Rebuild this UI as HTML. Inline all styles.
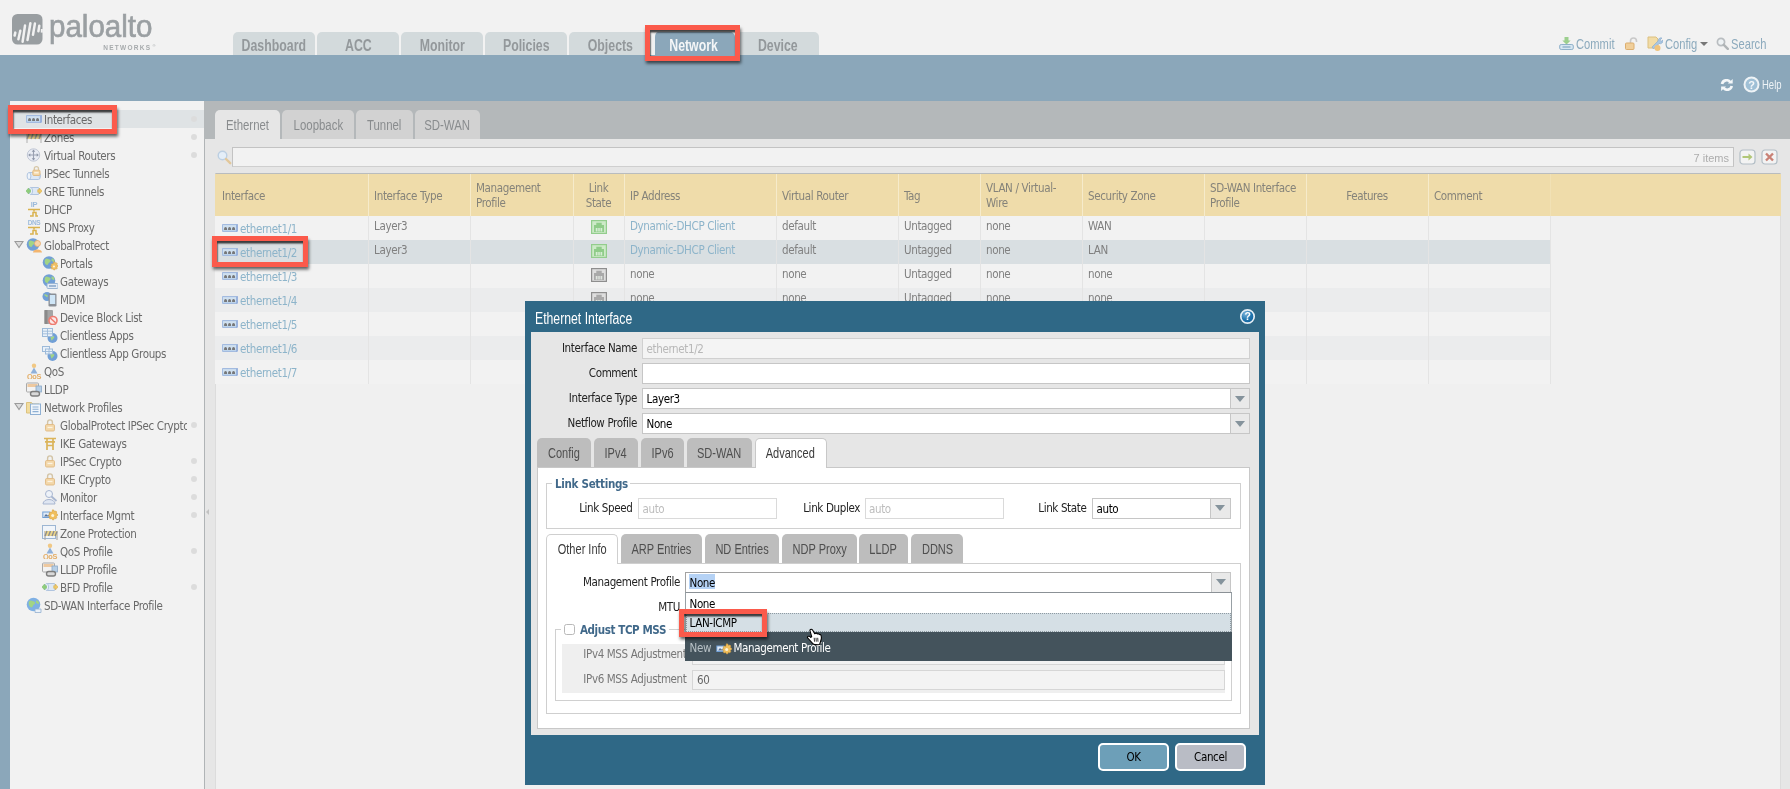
<!DOCTYPE html><html><head><meta charset="utf-8"><title>Ethernet Interface</title><style>
*{box-sizing:border-box;margin:0;padding:0}
html,body{width:1790px;height:789px;overflow:hidden;background:#f2f2f2}
body{position:relative;font-family:"DejaVu Sans Condensed","Liberation Sans",sans-serif;font-size:11.5px;letter-spacing:-0.36px;color:#6a6a6a}
#w{position:absolute;left:0;top:0;width:1790px;height:789px;will-change:transform}
.a{position:absolute}
.t{position:absolute;white-space:nowrap;line-height:20px;height:20px}
.n{font-family:"Liberation Sans",sans-serif;letter-spacing:0}
.c{display:inline-block;white-space:nowrap;transform-origin:0 50%}
.cc{transform-origin:50% 50%}
.red{position:absolute;border:5px solid #fb5a4b;box-shadow:1px 2.5px 3px rgba(0,0,0,.6),inset .6px 2.6px 1.6px rgba(0,0,0,.75)}
.dot{position:absolute;width:6px;height:6px;border-radius:3px;background:#dcdcdc;left:191px}
.vl{position:absolute;width:1px;background:#e4e4e4;top:216px;height:168px}
.hl{position:absolute;width:1px;background:#f6ebcb;top:174px;height:42px}
.lnk{color:#8db4ca}
.cell{color:#808080}
.lab{color:#222}
.inp{position:absolute;background:#fff;border:1px solid #c6c6c6}
.trg{position:absolute;background:#e9e9e9;border:1px solid #c6c6c6}
.trg:after{content:"";position:absolute;left:50%;top:50%;margin:-3px 0 0 -5.2px;border-left:5.2px solid transparent;border-right:5.2px solid transparent;border-top:6px solid #85939c}
.tab{position:absolute;border-radius:4px 4px 0 0;text-align:center}
</style></head><body><div id="w">
<div class="a" style="left:0px;top:0px;width:1790px;height:55px;background:#f2f2f2"></div>
<svg class="a" style="left:12px;top:13.8px" width="31" height="31" viewBox="0 0 31 31"><rect width="30.5" height="30.5" rx="5.5" fill="#999ea1"/><g stroke="#f2f2f2" stroke-width="2.5" stroke-linecap="round"><path d="M3.3 18.6L2.6 21.6"/><path d="M8.3 16.8L6.4 25.2"/><path d="M13 11.6L10.6 27.8"/><path d="M18.4 9.2L15.5 26"/><path d="M22.9 9.6L21 20.8"/><path d="M27.3 11.8L26.4 17.2"/></g><rect x="28.8" y="15" width="2" height="3.6" fill="#f2f2f2"/></svg>
<div class="t n" style="left:49.3px;top:17px;font-size:30.5px;color:#9a9fa2;line-height:40px;height:40px;top:6px;-webkit-text-stroke:0.65px #9a9fa2"><span class="c" style="transform:scaleX(0.968)">paloalto</span></div>
<div class="t n" style="left:103.3px;top:37.7px;font-size:6.5px;font-weight:bold;color:#a6aaac;letter-spacing:1.25px">NETWORKS</div>
<div class="t n" style="left:152.5px;top:35.5px;font-size:4px;color:#a6aaac">®</div>
<div class="a" style="left:233px;top:32px;width:82px;height:23px;background:#d3dadc;border-radius:5px 5px 0 0;"></div>
<div class="t n" style="left:214px;width:120px;top:35.6px;text-align:center;font-size:16px;font-weight:bold;color:#93989b"><span class="c cc" style="transform:scaleX(0.77)">Dashboard</span></div>
<div class="a" style="left:317px;top:32px;width:82px;height:23px;background:#d3dadc;border-radius:5px 5px 0 0;"></div>
<div class="t n" style="left:298px;width:120px;top:35.6px;text-align:center;font-size:16px;font-weight:bold;color:#93989b"><span class="c cc" style="transform:scaleX(0.77)">ACC</span></div>
<div class="a" style="left:401px;top:32px;width:82px;height:23px;background:#d3dadc;border-radius:5px 5px 0 0;"></div>
<div class="t n" style="left:382px;width:120px;top:35.6px;text-align:center;font-size:16px;font-weight:bold;color:#93989b"><span class="c cc" style="transform:scaleX(0.77)">Monitor</span></div>
<div class="a" style="left:485px;top:32px;width:82px;height:23px;background:#d3dadc;border-radius:5px 5px 0 0;"></div>
<div class="t n" style="left:466px;width:120px;top:35.6px;text-align:center;font-size:16px;font-weight:bold;color:#93989b"><span class="c cc" style="transform:scaleX(0.77)">Policies</span></div>
<div class="a" style="left:569px;top:32px;width:82px;height:23px;background:#d3dadc;border-radius:5px 5px 0 0;"></div>
<div class="t n" style="left:550px;width:120px;top:35.6px;text-align:center;font-size:16px;font-weight:bold;color:#93989b"><span class="c cc" style="transform:scaleX(0.77)">Objects</span></div>
<div class="a" style="left:653px;top:32px;width:82px;height:23px;background:#8ba7ba;border-radius:5px 5px 0 0;border-left:2px solid #eef1f2;"></div>
<div class="t n" style="left:634px;width:120px;top:35.6px;text-align:center;font-size:16px;font-weight:bold;color:#f4f6f7"><span class="c cc" style="transform:scaleX(0.77)">Network</span></div>
<div class="a" style="left:737px;top:32px;width:82px;height:23px;background:#d3dadc;border-radius:5px 5px 0 0;"></div>
<div class="t n" style="left:718px;width:120px;top:35.6px;text-align:center;font-size:16px;font-weight:bold;color:#93989b"><span class="c cc" style="transform:scaleX(0.77)">Device</span></div>
<div class="t n" style="left:1575.6px;top:33.8px;font-size:15px;color:#8caabd"><span class="c" style="transform:scaleX(0.745)">Commit</span></div>
<div class="t n" style="left:1665.2px;top:33.8px;font-size:15px;color:#8caabd"><span class="c" style="transform:scaleX(0.745)">Config</span></div>
<div class="t n" style="left:1731px;top:33.8px;font-size:15px;color:#8caabd"><span class="c" style="transform:scaleX(0.745)">Search</span></div>
<div class="a" style="left:1700px;top:42px;border-left:4px solid transparent;border-right:4px solid transparent;border-top:4.5px solid #777"></div>
<svg class="a" style="left:1559px;top:36px" width="15" height="15" viewBox="0 0 15 15"><path d="M5.5 1h4v3.5h2.2L7.5 8.6 3.3 4.5h2.2z" fill="#9ccf8e"/><rect x="0.7" y="8.5" width="13.6" height="5" rx="1.5" fill="#d6e6f1" stroke="#8fb1c9"/><rect x="3.5" y="10.3" width="8" height="1.4" fill="#8fb1c9"/></svg>
<svg class="a" style="left:1625px;top:37px" width="13" height="14" viewBox="0 0 13 14"><path d="M5.5 6V4a3 3 0 0 1 6 0v1" fill="none" stroke="#c9c9c9" stroke-width="1.6"/><rect x="0.5" y="6" width="8.5" height="6.5" rx="1" fill="#f0cf9b" stroke="#dcae6f"/></svg>
<svg class="a" style="left:1647px;top:36px" width="16" height="16" viewBox="0 0 16 16"><path d="M1 1h8l2 2v9H1z" fill="#f2dca6" stroke="#dcc080"/><path d="M5 11l6-6a3 3 0 0 1 4-3l-2 2 1 1.5 2-1.5a3 3 0 0 1-4 3.5l-5.5 5.5z" fill="#a9c6e2" stroke="#86aacb" stroke-width=".6"/><circle cx="10.5" cy="12" r="3" fill="#f0c47c"/></svg>
<svg class="a" style="left:1716px;top:37px" width="13" height="13" viewBox="0 0 13 13"><circle cx="5" cy="5" r="3.6" fill="#eef2f4" stroke="#b9bdc0" stroke-width="1.7"/><path d="M7.8 7.8l4 4" stroke="#b0b4b6" stroke-width="2.4" stroke-linecap="round"/></svg>
<div class="a" style="left:0px;top:55px;width:1790px;height:46px;background:#8ba7ba"></div>
<div class="a" style="left:0px;top:101px;width:10px;height:688px;background:#8ba7ba"></div>
<svg class="a" style="left:1719.5px;top:79px" width="13.8" height="12" viewBox="0 0 15 13"><g fill="none" stroke="#f4f7f9" stroke-width="2.9"><path d="M2.2 5.5a5 5 0 0 1 9-2"/><path d="M12.8 7.5a5 5 0 0 1-9 2"/></g><path d="M8.5 4.8h5.3V0z" fill="#f4f7f9"/><path d="M6.5 8.2H1.2V13z" fill="#f4f7f9"/></svg>
<svg class="a" style="left:1743px;top:76px" width="17" height="17" viewBox="0 0 17 17"><circle cx="8.5" cy="8.5" r="7" fill="#9fc0d6" stroke="#eef3f6" stroke-width="2"/><text x="8.5" y="12.5" text-anchor="middle" font-family="Liberation Sans,sans-serif" font-weight="bold" font-size="11" fill="#f4f7f9">?</text></svg>
<div class="t n" style="left:1761.6px;top:74.5px;font-size:13px;color:#eef3f6"><span class="c" style="transform:scaleX(0.73)">Help</span></div>
<div class="a" style="left:10px;top:101px;width:194px;height:688px;background:#f2f2f2;border-radius:6.5px 0 0 0"></div>
<div class="a" style="left:10px;top:110px;width:194px;height:18px;background:#dfe3e5"></div>
<svg class="a" style="left:26px;top:111px" width="16" height="16" viewBox="0 0 16 16"><rect x="0" y="4.1" width="15.8" height="7.8" rx=".8" fill="#a3bbe0"/><path d="M14.1 5.1l1.7-1v7l-1.7.8z" fill="#93addb"/><rect x="1" y="5.1" width="13.1" height="5.6" fill="#cfe0f0"/><rect x="1" y="9.3" width="13.1" height="1.4" fill="#b9d2ec"/><path d="M2.1 9.9V8.5q0-1.6 1.45-1.6T5 8.5v1.4zM6.1 9.9V8.5q0-1.6 1.45-1.6T9 8.5v1.4zM10.1 9.9V8.5q0-1.6 1.45-1.6T13 8.5v1.4z" fill="#777879"/></svg>
<div class="t " style="left:44px;top:109.5px;">Interfaces</div>
<div class="dot" style="top:116px"></div>
<svg class="a" style="left:26px;top:129px" width="16" height="16" viewBox="0 0 16 16"><path d="M1 14V5M15 14V5" stroke="#bbb" stroke-width="1.2"/><path d="M1 5h14v5H1z" fill="#ecd58a"/><path d="M3 5l-2 5M7 5l-2 5M11 5l-2 5M15 5l-2 5" stroke="#9a9a9a" stroke-width="1.5"/></svg>
<div class="t " style="left:44px;top:127.5px;">Zones</div>
<div class="dot" style="top:134px"></div>
<svg class="a" style="left:26px;top:147px" width="16" height="16" viewBox="0 0 16 16"><circle cx="7.5" cy="8" r="6.2" fill="#e9ecf4" stroke="#c0c6d4"/><path d="M7.5 4v8M3.5 8h8" stroke="#9aa1b2" stroke-width="1.1"/><path d="M7.5 2.6l1.8 2.2H5.7zM7.5 13.4l1.8-2.2H5.7zM2.1 8l2.2-1.8v3.6zM12.9 8l-2.2-1.8v3.6z" fill="#8f97a9"/></svg>
<div class="t " style="left:44px;top:145.5px;">Virtual Routers</div>
<div class="dot" style="top:152px"></div>
<svg class="a" style="left:26px;top:165px" width="16" height="16" viewBox="0 0 16 16"><path d="M3 7.5h9.5v7H3z" fill="#dde8f5"/><path d="M3 7.5h9.5M3 14.5h9.5" stroke="#a9bfdc" stroke-width=".9"/><ellipse cx="3" cy="11" rx="1.9" ry="3.5" fill="#eef4fb" stroke="#a9bfdc" stroke-width=".9"/><path d="M12.5 7.5a1.9 3.5 0 0 1 0 7" fill="#c9daef" stroke="#a9bfdc" stroke-width=".9"/><path d="M8.3 5.2V3.8a2.1 2.1 0 0 1 4.2 0v1.4" fill="none" stroke="#d6c7a8" stroke-width="1.3"/><rect x="6.8" y="5.2" width="7.2" height="5.3" rx="1" fill="#f3d6a6" stroke="#e0b77c" stroke-width=".9"/><rect x="8.2" y="7.1" width="4.4" height="1.3" fill="#fdf5e6"/></svg>
<div class="t " style="left:44px;top:163.5px;">IPSec Tunnels</div>
<svg class="a" style="left:26px;top:183px" width="16" height="16" viewBox="0 0 16 16"><path d="M4.5 4.5h7.5v7H4.5z" fill="#dde8f5"/><path d="M4.5 4.5h7.5M4.5 11.5h7.5" stroke="#a9bfdc" stroke-width=".9"/><ellipse cx="4.8" cy="8" rx="1.7" ry="3.5" fill="#eef4fb" stroke="#a9bfdc" stroke-width=".9"/><path d="M12 4.5a1.7 3.5 0 0 1 0 7" fill="#c9daef" stroke="#a9bfdc" stroke-width=".9"/><path d="M0 8l2.6-3v1.7h1.9v2.6H2.6V11z" fill="#8fcf7c" stroke="#6fb75e" stroke-width=".5"/><path d="M16 8l-2.6-3v1.7h-1.7v2.6h1.7V11z" fill="#efc968" stroke="#d9ab42" stroke-width=".5"/></svg>
<div class="t " style="left:44px;top:181.5px;">GRE Tunnels</div>
<svg class="a" style="left:26px;top:201px" width="16" height="16" viewBox="0 0 16 16"><text x="8" y="6" text-anchor="middle" font-family="Liberation Sans,sans-serif" font-size="7.5" font-weight="bold" fill="#9dbbdb">IP</text><path d="M2 8.5h12M8 8.5v2M4 15h3v-3.5h3V15h2" fill="none" stroke="#d9b24e" stroke-width="1.5"/></svg>
<div class="t " style="left:44px;top:199.5px;">DHCP</div>
<svg class="a" style="left:26px;top:219px" width="16" height="16" viewBox="0 0 16 16"><text x="8" y="6" text-anchor="middle" font-family="Liberation Sans,sans-serif" font-size="6.5" font-weight="bold" fill="#9dbbdb">DNS</text><path d="M2 8.5h12M8 8.5v2M4 15h3v-3.5h3V15h2" fill="none" stroke="#d9b24e" stroke-width="1.5"/></svg>
<div class="t " style="left:44px;top:217.5px;">DNS Proxy</div>
<svg class="a" style="left:26px;top:237px" width="16" height="16" viewBox="0 0 16 16"><circle cx="7" cy="7.5" r="6.3" fill="#719fd6"/><path d="M3 4.5c2-2 3 0 4.5 0s1.5 2.5 0 3-1 2.5-2.5 2.5S2 7 3 4.5z" fill="#a2d485"/><path d="M9.5 3.5c1.5-.5 3 1 3 2.5s-2 1-3-.5z" fill="#a2d485"/><circle cx="11.5" cy="6.5" r="3" fill="#f6d3a8" stroke="#e4a869" stroke-width=".8"/><path d="M7 15.5c0-4 9-4 9 0z" fill="#f3b56e"/></svg>
<div class="t " style="left:44px;top:235.5px;">GlobalProtect</div>
<svg class="a" style="left:14px;top:240px" width="10" height="9" viewBox="0 0 10 9"><path d="M1 1.5h8L5 7.5z" fill="#dcdcdc" stroke="#9b9b9b" stroke-width="1.1"/></svg>
<svg class="a" style="left:42px;top:255px" width="16" height="16" viewBox="0 0 16 16"><circle cx="7" cy="7.5" r="6.3" fill="#719fd6"/><path d="M3 4.5c2-2 3 0 4.5 0s1.5 2.5 0 3-1 2.5-2.5 2.5S2 7 3 4.5z" fill="#a2d485"/><path d="M9.5 3.5c1.5-.5 3 1 3 2.5s-2 1-3-.5z" fill="#a2d485"/><g transform="translate(1.3 2.9)"><path d="M10.5 2.8l1.3.2.5 1.5 1.5-.500 1 1-.6 1.4 1.3.8v1.4l-1.3.8.6 1.4-1 1-1.5-.500-.500 1.5h-1.4l-.700-1.4-1.5.500-1-1 .600-1.5-1.3-.700V8.3l1.3-.800-.600-1.4 1-1 1.5.500z" fill="#f0c066" stroke="#d9a444" stroke-width=".6" transform="scale(.82) translate(2.3 1.9)"/><circle cx="10.65" cy="8.6" r="1.1" fill="#fdf3d6"/></g></svg>
<div class="t " style="left:60px;top:253.5px;">Portals</div>
<svg class="a" style="left:42px;top:273px" width="16" height="16" viewBox="0 0 16 16"><circle cx="7" cy="7.5" r="6.3" fill="#719fd6"/><path d="M3 4.5c2-2 3 0 4.5 0s1.5 2.5 0 3-1 2.5-2.5 2.5S2 7 3 4.5z" fill="#a2d485"/><path d="M9.5 3.5c1.5-.5 3 1 3 2.5s-2 1-3-.5z" fill="#a2d485"/><rect x="5" y="10.5" width="11" height="5" rx="1" fill="#e4ecf5" stroke="#9bb5d3"/><path d="M7 13h7" stroke="#6f93bd" stroke-width="1.2"/></svg>
<div class="t " style="left:60px;top:271.5px;">Gateways</div>
<svg class="a" style="left:42px;top:291px" width="16" height="16" viewBox="0 0 16 16"><circle cx="5" cy="5.5" r="4.5" fill="#719fd6"/><path d="M2 4c1-1.5 2 0 3 0s1 2 0 2.3z" fill="#a2d485"/><rect x="6.5" y="2.5" width="8" height="13" rx="1.3" fill="#8a8f96"/><rect x="7.8" y="4" width="5.4" height="9" fill="#cfe6f7"/></svg>
<div class="t " style="left:60px;top:289.5px;">MDM</div>
<svg class="a" style="left:42px;top:309px" width="16" height="16" viewBox="0 0 16 16"><rect x="2.5" y="1" width="8.5" height="14" rx="1" fill="#a4a4a4"/><rect x="2.5" y="1" width="3" height="14" fill="#8a8a8a"/><circle cx="11" cy="11.5" r="4" fill="#fbe9e7" stroke="#ee7b70" stroke-width="1.6"/><path d="M8.3 9l5.4 5" stroke="#ee7b70" stroke-width="1.6"/></svg>
<div class="t " style="left:60px;top:307.5px;">Device Block List</div>
<svg class="a" style="left:42px;top:327px" width="16" height="16" viewBox="0 0 16 16"><circle cx="10.5" cy="11" r="5" fill="#719fd6"/><path d="M8 9c1.5-1.5 2.5 0 3.5 0s1 2 0 2.5-1 2-2 2z" fill="#a2d485"/><rect x=".5" y="1.5" width="10" height="8" fill="#e9f1f9" stroke="#9dbad9"/><path d="M.5 4.2h10M.5 6.8h10M5.5 1.5v8" stroke="#9dbad9" stroke-width=".9"/></svg>
<div class="t " style="left:60px;top:325.5px;">Clientless Apps</div>
<svg class="a" style="left:42px;top:345px" width="16" height="16" viewBox="0 0 16 16"><circle cx="10.5" cy="11" r="5" fill="#719fd6"/><path d="M8 9c1.5-1.5 2.5 0 3.5 0s1 2 0 2.5-1 2-2 2z" fill="#a2d485"/><rect x=".5" y="1.5" width="7" height="5" fill="#e9f1f9" stroke="#9dbad9"/><rect x="3.5" y="4" width="7" height="5" fill="#e9f1f9" stroke="#9dbad9"/><path d="M3.5 6.5h7M7 4v5" stroke="#9dbad9" stroke-width=".9"/></svg>
<div class="t " style="left:60px;top:343.5px;">Clientless App Groups</div>
<svg class="a" style="left:26px;top:363px" width="16" height="16" viewBox="0 0 16 16"><circle cx="8" cy="2.8" r="2.2" fill="#f1c884"/><path d="M4.5 10.5L8 4.5l3.5 6z" fill="#8fb0da"/><text x="8" y="15.8" text-anchor="middle" font-family="Liberation Sans,sans-serif" font-weight="bold" font-size="7" fill="#e3ad66" textLength="14" lengthAdjust="spacingAndGlyphs">QoS</text></svg>
<div class="t " style="left:44px;top:361.5px;">QoS</div>
<svg class="a" style="left:26px;top:381px" width="16" height="16" viewBox="0 0 16 16"><rect x=".5" y="2" width="12" height="9" rx="1" fill="#f3f3f3" stroke="#a9a9a9"/><rect x="1.5" y="3" width="10" height="3" fill="#eec9a0"/><rect x="10" y="5" width="5.5" height="6" fill="#b7cfe6" stroke="#8aa8c6" stroke-width=".8"/><rect x="4.5" y="10.5" width="9" height="4.5" rx="2.2" fill="#d9d9d9" stroke="#7e7e7e" stroke-width="1.4"/></svg>
<div class="t " style="left:44px;top:379.5px;">LLDP</div>
<svg class="a" style="left:26px;top:399px" width="16" height="16" viewBox="0 0 16 16"><path d="M.5 3.5h5l1.5 1.5h6v9H.5z" fill="#f2dc9e" stroke="#dcc27e"/><rect x="4.5" y="5" width="10" height="10.5" fill="#f1f6fb" stroke="#8fb0d3"/><path d="M6.5 8h6M6.5 10.3h6M6.5 12.6h6" stroke="#8fb0d3" stroke-width="1.1"/></svg>
<div class="t " style="left:44px;top:397.5px;">Network Profiles</div>
<svg class="a" style="left:14px;top:402px" width="10" height="9" viewBox="0 0 10 9"><path d="M1 1.5h8L5 7.5z" fill="#dcdcdc" stroke="#9b9b9b" stroke-width="1.1"/></svg>
<svg class="a" style="left:42px;top:417px" width="16" height="16" viewBox="0 0 16 16"><path d="M5.6 7.5V5.3a2.4 2.4 0 0 1 4.8 0v2.2" fill="none" stroke="#d3c4a6" stroke-width="1.4"/><rect x="3.5" y="7.5" width="9" height="6.5" rx="1.2" fill="#f3d7a9" stroke="#e0b982" stroke-width=".9"/><rect x="5.5" y="9.8" width="5" height="1.3" fill="#fcf3e2"/></svg>
<div class="t " style="left:60px;top:415.5px;width:127px;overflow:hidden">GlobalProtect IPSec Crypto</div>
<div class="dot" style="top:422px"></div>
<svg class="a" style="left:42px;top:435px" width="16" height="16" viewBox="0 0 16 16"><path d="M2 3.5h12M3 6.8h10M5 3.5V15M11 3.5V15M5 10.5h6" fill="none" stroke="#dbb45a" stroke-width="1.7"/></svg>
<div class="t " style="left:60px;top:433.5px;">IKE Gateways</div>
<svg class="a" style="left:42px;top:453px" width="16" height="16" viewBox="0 0 16 16"><path d="M5.6 7.5V5.3a2.4 2.4 0 0 1 4.8 0v2.2" fill="none" stroke="#d3c4a6" stroke-width="1.4"/><rect x="3.5" y="7.5" width="9" height="6.5" rx="1.2" fill="#f3d7a9" stroke="#e0b982" stroke-width=".9"/><rect x="5.5" y="9.8" width="5" height="1.3" fill="#fcf3e2"/></svg>
<div class="t " style="left:60px;top:451.5px;">IPSec Crypto</div>
<div class="dot" style="top:458px"></div>
<svg class="a" style="left:42px;top:471px" width="16" height="16" viewBox="0 0 16 16"><path d="M5.6 7.5V5.3a2.4 2.4 0 0 1 4.8 0v2.2" fill="none" stroke="#d3c4a6" stroke-width="1.4"/><rect x="3.5" y="7.5" width="9" height="6.5" rx="1.2" fill="#f3d7a9" stroke="#e0b982" stroke-width=".9"/><rect x="5.5" y="9.8" width="5" height="1.3" fill="#fcf3e2"/></svg>
<div class="t " style="left:60px;top:469.5px;">IKE Crypto</div>
<div class="dot" style="top:476px"></div>
<svg class="a" style="left:42px;top:489px" width="16" height="16" viewBox="0 0 16 16"><circle cx="7" cy="5" r="3.5" fill="#eef2f8" stroke="#a8b6d0"/><path d="M1 15c0-6 12-6 12 0z" fill="#dfe6f2" stroke="#a8b6d0"/><path d="M9.5 7.5l5 4.5" stroke="#a8b6d0" stroke-width="1.8"/></svg>
<div class="t " style="left:60px;top:487.5px;">Monitor</div>
<div class="dot" style="top:494px"></div>
<svg class="a" style="left:42px;top:507px" width="16" height="16" viewBox="0 0 16 16"><rect x=".3" y="4.5" width="8" height="6.5" fill="#6f9fd6"/><rect x="1.3" y="5.5" width="6" height="4.5" fill="#dfeaf6"/><path d="M2 9.5l2-2.5 1.5 1.5 1-1 1 2z" fill="#55729a"/><path d="M10.5 2.8l1.3.2.5 1.5 1.5-.500 1 1-.6 1.4 1.3.8v1.4l-1.3.8.6 1.4-1 1-1.5-.500-.500 1.5h-1.4l-.700-1.4-1.5.500-1-1 .600-1.5-1.3-.700V8.3l1.3-.800-.600-1.4 1-1 1.5.500z" fill="#f0bf5e" stroke="#d9a03c" stroke-width=".6"/><circle cx="10.7" cy="8.6" r="1.5" fill="#fdf3d6"/></svg>
<div class="t " style="left:60px;top:505.5px;">Interface Mgmt</div>
<div class="dot" style="top:512px"></div>
<svg class="a" style="left:42px;top:525px" width="16" height="16" viewBox="0 0 16 16"><rect x=".5" y=".5" width="13" height="13" fill="#f1f5fa" stroke="#9db6d3"/><path d="M3 15V6M15 15V6" stroke="#aaa" stroke-width="1.2"/><path d="M3 6h12v5H3z" fill="#ecd58a"/><path d="M5 6l-2 5M8.5 6l-2 5M12 6l-2 5M15 6.5l-1.8 4.5" stroke="#8d8d8d" stroke-width="1.4"/></svg>
<div class="t " style="left:60px;top:523.5px;">Zone Protection</div>
<svg class="a" style="left:42px;top:543px" width="16" height="16" viewBox="0 0 16 16"><circle cx="8" cy="2.8" r="2.2" fill="#f1c884"/><path d="M4.5 10.5L8 4.5l3.5 6z" fill="#8fb0da"/><text x="8" y="15.8" text-anchor="middle" font-family="Liberation Sans,sans-serif" font-weight="bold" font-size="7" fill="#e3ad66" textLength="14" lengthAdjust="spacingAndGlyphs">QoS</text></svg>
<div class="t " style="left:60px;top:541.5px;">QoS Profile</div>
<div class="dot" style="top:548px"></div>
<svg class="a" style="left:42px;top:561px" width="16" height="16" viewBox="0 0 16 16"><rect x=".5" y="2" width="12" height="9" rx="1" fill="#f3f3f3" stroke="#a9a9a9"/><rect x="1.5" y="3" width="10" height="3" fill="#eec9a0"/><rect x="10" y="5" width="5.5" height="6" fill="#b7cfe6" stroke="#8aa8c6" stroke-width=".8"/><rect x="4.5" y="10.5" width="9" height="4.5" rx="2.2" fill="#d9d9d9" stroke="#7e7e7e" stroke-width="1.4"/></svg>
<div class="t " style="left:60px;top:559.5px;">LLDP Profile</div>
<svg class="a" style="left:42px;top:579px" width="16" height="16" viewBox="0 0 16 16"><path d="M4.5 4.5h7.5v7H4.5z" fill="#dde8f5"/><path d="M4.5 4.5h7.5M4.5 11.5h7.5" stroke="#a9bfdc" stroke-width=".9"/><ellipse cx="4.8" cy="8" rx="1.7" ry="3.5" fill="#eef4fb" stroke="#a9bfdc" stroke-width=".9"/><path d="M12 4.5a1.7 3.5 0 0 1 0 7" fill="#c9daef" stroke="#a9bfdc" stroke-width=".9"/><path d="M0 8l2.6-3v1.7h1.9v2.6H2.6V11z" fill="#8fcf7c" stroke="#6fb75e" stroke-width=".5"/><path d="M16 8l-2.6-3v1.7h-1.7v2.6h1.7V11z" fill="#efc968" stroke="#d9ab42" stroke-width=".5"/></svg>
<div class="t " style="left:60px;top:577.5px;">BFD Profile</div>
<div class="dot" style="top:584px"></div>
<svg class="a" style="left:26px;top:597px" width="16" height="16" viewBox="0 0 16 16"><circle cx="7.5" cy="7.5" r="6.8" fill="#7fb0e4"/><path d="M3 4.5c2-2 3.5 0 5 0s1.5 2.5 0 3-1 3-2.5 3S2 7 3 4.5z" fill="#a2d485"/><path d="M10 3.5c1.5-.5 3 1 3 2.5s-2 1-3-.5z" fill="#a2d485"/><path d="M9 12h6v3.5H9z" fill="#eaf1f8" stroke="#93b0d0" stroke-width=".8"/></svg>
<div class="t " style="left:44px;top:595.5px;">SD-WAN Interface Profile</div>
<div class="a" style="left:204px;top:101px;width:1586px;height:688px;background:#e6e6e6"></div>
<div class="a" style="left:204px;top:101px;width:1586px;height:38px;background:#b4b8ba"></div>
<div class="a" style="left:204px;top:139px;width:1.3px;height:650px;background:#b0b4b6"></div>
<div class="a" style="left:206px;top:509px;border-top:3.5px solid transparent;border-bottom:3.5px solid transparent;border-right:3.5px solid #c2c2c2"></div>
<div class="a" style="left:215px;top:110px;width:65px;height:29px;background:#e6e6e6;border-radius:5px 5px 0 0"></div>
<div class="t n" style="left:187.5px;width:120px;top:114.5px;text-align:center;font-size:14px;color:#898c8e"><span class="c cc" style="transform:scaleX(0.815)">Ethernet</span></div>
<div class="a" style="left:282px;top:110px;width:72px;height:29px;background:#d2d2d2;border-radius:5px 5px 0 0"></div>
<div class="t n" style="left:258px;width:120px;top:114.5px;text-align:center;font-size:14px;color:#898c8e"><span class="c cc" style="transform:scaleX(0.815)">Loopback</span></div>
<div class="a" style="left:356px;top:110px;width:57px;height:29px;background:#d2d2d2;border-radius:5px 5px 0 0"></div>
<div class="t n" style="left:324.5px;width:120px;top:114.5px;text-align:center;font-size:14px;color:#898c8e"><span class="c cc" style="transform:scaleX(0.815)">Tunnel</span></div>
<div class="a" style="left:415px;top:110px;width:65px;height:29px;background:#d2d2d2;border-radius:5px 5px 0 0"></div>
<div class="t n" style="left:387.5px;width:120px;top:114.5px;text-align:center;font-size:14px;color:#898c8e"><span class="c cc" style="transform:scaleX(0.815)">SD-WAN</span></div>
<svg class="a" style="left:217px;top:150px" width="15" height="15" viewBox="0 0 15 15"><circle cx="5.5" cy="5.5" r="4.3" fill="#e4eef8" stroke="#bccfe2" stroke-width="1.4"/><path d="M9 9l4.2 4.2" stroke="#e2c79a" stroke-width="2.4" stroke-linecap="round"/></svg>
<div class="a" style="left:232px;top:147px;width:1502px;height:20px;background:#f2f2f2;border:1px solid #c3c3c3;border-bottom-color:#cfcfcf"></div>
<div class="t n" style="right:61px;top:147.5px;text-align:right;font-size:11px;color:#adadad">7 items</div>
<svg class="a" style="left:1739px;top:149px" width="17" height="16" viewBox="0 0 17 16"><rect x="1" y="1" width="15" height="14" rx="3" fill="#f3f3f3" stroke="#b3bec6" stroke-width="1.2"/><path d="M3.5 7h6V4.5L13.5 8 9.5 11.5V9h-6z" fill="#b1c778"/></svg>
<svg class="a" style="left:1761px;top:149px" width="17" height="16" viewBox="0 0 17 16"><rect x="1" y="1" width="15" height="14" rx="3" fill="#f3f3f3" stroke="#b3bec6" stroke-width="1.2"/><path d="M5 4.5l7 7M12 4.5l-7 7" stroke="#c98176" stroke-width="2.4"/></svg>
<div class="a" style="left:215px;top:173px;width:1566px;height:616px;background:#f0f0f0;border-top:1px solid #b9bcbe;border-left:1px solid #dcdcdc;border-right:1px solid #dcdcdc"></div>
<div class="a" style="left:215px;top:174px;width:1566px;height:42px;background:#efdcaa"></div>
<div class="a" style="left:215px;top:216px;width:1335px;height:24px;background:#f2f2f2"></div>
<div class="a" style="left:215px;top:240px;width:1335px;height:24px;background:#d9dfe2"></div>
<div class="a" style="left:215px;top:264px;width:1335px;height:24px;background:#f2f2f2"></div>
<div class="a" style="left:215px;top:288px;width:1335px;height:24px;background:#ebeced"></div>
<div class="a" style="left:215px;top:312px;width:1335px;height:24px;background:#f2f2f2"></div>
<div class="a" style="left:215px;top:336px;width:1335px;height:24px;background:#ebeced"></div>
<div class="a" style="left:215px;top:360px;width:1335px;height:24px;background:#f2f2f2"></div>
<div class="vl" style="left:368px"></div>
<div class="hl" style="left:368px"></div>
<div class="vl" style="left:470px"></div>
<div class="hl" style="left:470px"></div>
<div class="vl" style="left:573px"></div>
<div class="hl" style="left:573px"></div>
<div class="vl" style="left:624px"></div>
<div class="hl" style="left:624px"></div>
<div class="vl" style="left:776px"></div>
<div class="hl" style="left:776px"></div>
<div class="vl" style="left:898px"></div>
<div class="hl" style="left:898px"></div>
<div class="vl" style="left:980px"></div>
<div class="hl" style="left:980px"></div>
<div class="vl" style="left:1082px"></div>
<div class="hl" style="left:1082px"></div>
<div class="vl" style="left:1204px"></div>
<div class="hl" style="left:1204px"></div>
<div class="vl" style="left:1306px"></div>
<div class="hl" style="left:1306px"></div>
<div class="vl" style="left:1428px"></div>
<div class="hl" style="left:1428px"></div>
<div class="vl" style="left:1550px"></div>
<div class="hl" style="left:1550px;opacity:.35"></div>
<div class="t " style="left:222px;top:185.5px;color:#85837a">Interface</div>
<div class="t " style="left:374px;top:185.5px;color:#85837a">Interface Type</div>
<div class="t " style="left:476px;top:178px;color:#85837a">Management</div>
<div class="t " style="left:476px;top:193px;color:#85837a">Profile</div>
<div class="t " style="left:548.5px;width:100px;top:178px;text-align:center;color:#85837a">Link</div>
<div class="t " style="left:548.5px;width:100px;top:193px;text-align:center;color:#85837a">State</div>
<div class="t " style="left:630px;top:185.5px;color:#85837a">IP Address</div>
<div class="t " style="left:782px;top:185.5px;color:#85837a">Virtual Router</div>
<div class="t " style="left:904px;top:185.5px;color:#85837a">Tag</div>
<div class="t " style="left:986px;top:178px;color:#85837a">VLAN / Virtual-</div>
<div class="t " style="left:986px;top:193px;color:#85837a">Wire</div>
<div class="t " style="left:1088px;top:185.5px;color:#85837a">Security Zone</div>
<div class="t " style="left:1210px;top:178px;color:#85837a">SD-WAN Interface</div>
<div class="t " style="left:1210px;top:193px;color:#85837a">Profile</div>
<div class="t " style="left:1317px;width:100px;top:185.5px;text-align:center;color:#85837a">Features</div>
<div class="t " style="left:1434px;top:185.5px;color:#85837a">Comment</div>
<svg class="a" style="left:222px;top:220px" width="16" height="16" viewBox="0 0 16 16"><rect x="0" y="4.1" width="15.8" height="7.8" rx=".8" fill="#a3bbe0"/><path d="M14.1 5.1l1.7-1v7l-1.7.8z" fill="#93addb"/><rect x="1" y="5.1" width="13.1" height="5.6" fill="#cfe0f0"/><rect x="1" y="9.3" width="13.1" height="1.4" fill="#b9d2ec"/><path d="M2.1 9.9V8.5q0-1.6 1.45-1.6T5 8.5v1.4zM6.1 9.9V8.5q0-1.6 1.45-1.6T9 8.5v1.4zM10.1 9.9V8.5q0-1.6 1.45-1.6T13 8.5v1.4z" fill="#777879"/></svg>
<div class="t lnk" style="left:240px;top:219px;">ethernet1/1</div>
<div class="t cell" style="left:374px;top:216.2px;">Layer3</div>
<svg class="a" style="left:591px;top:220px" width="16" height="14" viewBox="0 0 16 14"><rect x=".6" y=".6" width="14.8" height="12.8" fill="#cdeac8" stroke="#93cd8d" stroke-width="1.2"/><path d="M3 12V5h2.3V2.8h5.4V5H13v7z" fill="#8fcc89"/><path d="M5.3 11.5V8M7.1 11.5V8M8.9 11.5V8M10.7 11.5V8" stroke="#f4faf3" stroke-width=".9"/></svg>
<div class="t lnk" style="left:630px;top:216.2px;">Dynamic-DHCP Client</div>
<div class="t cell" style="left:782px;top:216.2px;">default</div>
<div class="t cell" style="left:904px;top:216.2px;">Untagged</div>
<div class="t cell" style="left:986px;top:216.2px;">none</div>
<div class="t cell" style="left:1088px;top:216.2px;">WAN</div>
<svg class="a" style="left:222px;top:244px" width="16" height="16" viewBox="0 0 16 16"><rect x="0" y="4.1" width="15.8" height="7.8" rx=".8" fill="#a3bbe0"/><path d="M14.1 5.1l1.7-1v7l-1.7.8z" fill="#93addb"/><rect x="1" y="5.1" width="13.1" height="5.6" fill="#cfe0f0"/><rect x="1" y="9.3" width="13.1" height="1.4" fill="#b9d2ec"/><path d="M2.1 9.9V8.5q0-1.6 1.45-1.6T5 8.5v1.4zM6.1 9.9V8.5q0-1.6 1.45-1.6T9 8.5v1.4zM10.1 9.9V8.5q0-1.6 1.45-1.6T13 8.5v1.4z" fill="#777879"/></svg>
<div class="t lnk" style="left:240px;top:243px;">ethernet1/2</div>
<div class="t cell" style="left:374px;top:240.2px;">Layer3</div>
<svg class="a" style="left:591px;top:244px" width="16" height="14" viewBox="0 0 16 14"><rect x=".6" y=".6" width="14.8" height="12.8" fill="#cdeac8" stroke="#93cd8d" stroke-width="1.2"/><path d="M3 12V5h2.3V2.8h5.4V5H13v7z" fill="#8fcc89"/><path d="M5.3 11.5V8M7.1 11.5V8M8.9 11.5V8M10.7 11.5V8" stroke="#f4faf3" stroke-width=".9"/></svg>
<div class="t lnk" style="left:630px;top:240.2px;">Dynamic-DHCP Client</div>
<div class="t cell" style="left:782px;top:240.2px;">default</div>
<div class="t cell" style="left:904px;top:240.2px;">Untagged</div>
<div class="t cell" style="left:986px;top:240.2px;">none</div>
<div class="t cell" style="left:1088px;top:240.2px;">LAN</div>
<svg class="a" style="left:222px;top:268px" width="16" height="16" viewBox="0 0 16 16"><rect x="0" y="4.1" width="15.8" height="7.8" rx=".8" fill="#a3bbe0"/><path d="M14.1 5.1l1.7-1v7l-1.7.8z" fill="#93addb"/><rect x="1" y="5.1" width="13.1" height="5.6" fill="#cfe0f0"/><rect x="1" y="9.3" width="13.1" height="1.4" fill="#b9d2ec"/><path d="M2.1 9.9V8.5q0-1.6 1.45-1.6T5 8.5v1.4zM6.1 9.9V8.5q0-1.6 1.45-1.6T9 8.5v1.4zM10.1 9.9V8.5q0-1.6 1.45-1.6T13 8.5v1.4z" fill="#777879"/></svg>
<div class="t lnk" style="left:240px;top:267px;">ethernet1/3</div>
<svg class="a" style="left:591px;top:268px" width="16" height="14" viewBox="0 0 16 14"><rect x=".6" y=".6" width="14.8" height="12.8" fill="#dedede" stroke="#8e8e8e" stroke-width="1.2"/><path d="M3 12V5h2.3V2.8h5.4V5H13v7z" fill="#a9a9a9"/><path d="M5.3 11.5V8M7.1 11.5V8M8.9 11.5V8M10.7 11.5V8" stroke="#f4faf3" stroke-width=".9"/></svg>
<div class="t cell" style="left:630px;top:264.2px;">none</div>
<div class="t cell" style="left:782px;top:264.2px;">none</div>
<div class="t cell" style="left:904px;top:264.2px;">Untagged</div>
<div class="t cell" style="left:986px;top:264.2px;">none</div>
<div class="t cell" style="left:1088px;top:264.2px;">none</div>
<svg class="a" style="left:222px;top:292px" width="16" height="16" viewBox="0 0 16 16"><rect x="0" y="4.1" width="15.8" height="7.8" rx=".8" fill="#a3bbe0"/><path d="M14.1 5.1l1.7-1v7l-1.7.8z" fill="#93addb"/><rect x="1" y="5.1" width="13.1" height="5.6" fill="#cfe0f0"/><rect x="1" y="9.3" width="13.1" height="1.4" fill="#b9d2ec"/><path d="M2.1 9.9V8.5q0-1.6 1.45-1.6T5 8.5v1.4zM6.1 9.9V8.5q0-1.6 1.45-1.6T9 8.5v1.4zM10.1 9.9V8.5q0-1.6 1.45-1.6T13 8.5v1.4z" fill="#777879"/></svg>
<div class="t lnk" style="left:240px;top:291px;">ethernet1/4</div>
<svg class="a" style="left:591px;top:292px" width="16" height="14" viewBox="0 0 16 14"><rect x=".6" y=".6" width="14.8" height="12.8" fill="#dedede" stroke="#8e8e8e" stroke-width="1.2"/><path d="M3 12V5h2.3V2.8h5.4V5H13v7z" fill="#a9a9a9"/><path d="M5.3 11.5V8M7.1 11.5V8M8.9 11.5V8M10.7 11.5V8" stroke="#f4faf3" stroke-width=".9"/></svg>
<div class="t cell" style="left:630px;top:288.2px;">none</div>
<div class="t cell" style="left:782px;top:288.2px;">none</div>
<div class="t cell" style="left:904px;top:288.2px;">Untagged</div>
<div class="t cell" style="left:986px;top:288.2px;">none</div>
<div class="t cell" style="left:1088px;top:288.2px;">none</div>
<svg class="a" style="left:222px;top:316px" width="16" height="16" viewBox="0 0 16 16"><rect x="0" y="4.1" width="15.8" height="7.8" rx=".8" fill="#a3bbe0"/><path d="M14.1 5.1l1.7-1v7l-1.7.8z" fill="#93addb"/><rect x="1" y="5.1" width="13.1" height="5.6" fill="#cfe0f0"/><rect x="1" y="9.3" width="13.1" height="1.4" fill="#b9d2ec"/><path d="M2.1 9.9V8.5q0-1.6 1.45-1.6T5 8.5v1.4zM6.1 9.9V8.5q0-1.6 1.45-1.6T9 8.5v1.4zM10.1 9.9V8.5q0-1.6 1.45-1.6T13 8.5v1.4z" fill="#777879"/></svg>
<div class="t lnk" style="left:240px;top:315px;">ethernet1/5</div>
<svg class="a" style="left:591px;top:316px" width="16" height="14" viewBox="0 0 16 14"><rect x=".6" y=".6" width="14.8" height="12.8" fill="#dedede" stroke="#8e8e8e" stroke-width="1.2"/><path d="M3 12V5h2.3V2.8h5.4V5H13v7z" fill="#a9a9a9"/><path d="M5.3 11.5V8M7.1 11.5V8M8.9 11.5V8M10.7 11.5V8" stroke="#f4faf3" stroke-width=".9"/></svg>
<div class="t cell" style="left:630px;top:312.2px;">none</div>
<div class="t cell" style="left:782px;top:312.2px;">none</div>
<div class="t cell" style="left:904px;top:312.2px;">Untagged</div>
<div class="t cell" style="left:986px;top:312.2px;">none</div>
<div class="t cell" style="left:1088px;top:312.2px;">none</div>
<svg class="a" style="left:222px;top:340px" width="16" height="16" viewBox="0 0 16 16"><rect x="0" y="4.1" width="15.8" height="7.8" rx=".8" fill="#a3bbe0"/><path d="M14.1 5.1l1.7-1v7l-1.7.8z" fill="#93addb"/><rect x="1" y="5.1" width="13.1" height="5.6" fill="#cfe0f0"/><rect x="1" y="9.3" width="13.1" height="1.4" fill="#b9d2ec"/><path d="M2.1 9.9V8.5q0-1.6 1.45-1.6T5 8.5v1.4zM6.1 9.9V8.5q0-1.6 1.45-1.6T9 8.5v1.4zM10.1 9.9V8.5q0-1.6 1.45-1.6T13 8.5v1.4z" fill="#777879"/></svg>
<div class="t lnk" style="left:240px;top:339px;">ethernet1/6</div>
<svg class="a" style="left:591px;top:340px" width="16" height="14" viewBox="0 0 16 14"><rect x=".6" y=".6" width="14.8" height="12.8" fill="#dedede" stroke="#8e8e8e" stroke-width="1.2"/><path d="M3 12V5h2.3V2.8h5.4V5H13v7z" fill="#a9a9a9"/><path d="M5.3 11.5V8M7.1 11.5V8M8.9 11.5V8M10.7 11.5V8" stroke="#f4faf3" stroke-width=".9"/></svg>
<div class="t cell" style="left:630px;top:336.2px;">none</div>
<div class="t cell" style="left:782px;top:336.2px;">none</div>
<div class="t cell" style="left:904px;top:336.2px;">Untagged</div>
<div class="t cell" style="left:986px;top:336.2px;">none</div>
<div class="t cell" style="left:1088px;top:336.2px;">none</div>
<svg class="a" style="left:222px;top:364px" width="16" height="16" viewBox="0 0 16 16"><rect x="0" y="4.1" width="15.8" height="7.8" rx=".8" fill="#a3bbe0"/><path d="M14.1 5.1l1.7-1v7l-1.7.8z" fill="#93addb"/><rect x="1" y="5.1" width="13.1" height="5.6" fill="#cfe0f0"/><rect x="1" y="9.3" width="13.1" height="1.4" fill="#b9d2ec"/><path d="M2.1 9.9V8.5q0-1.6 1.45-1.6T5 8.5v1.4zM6.1 9.9V8.5q0-1.6 1.45-1.6T9 8.5v1.4zM10.1 9.9V8.5q0-1.6 1.45-1.6T13 8.5v1.4z" fill="#777879"/></svg>
<div class="t lnk" style="left:240px;top:363px;">ethernet1/7</div>
<svg class="a" style="left:591px;top:364px" width="16" height="14" viewBox="0 0 16 14"><rect x=".6" y=".6" width="14.8" height="12.8" fill="#dedede" stroke="#8e8e8e" stroke-width="1.2"/><path d="M3 12V5h2.3V2.8h5.4V5H13v7z" fill="#a9a9a9"/><path d="M5.3 11.5V8M7.1 11.5V8M8.9 11.5V8M10.7 11.5V8" stroke="#f4faf3" stroke-width=".9"/></svg>
<div class="t cell" style="left:630px;top:360.2px;">none</div>
<div class="t cell" style="left:782px;top:360.2px;">none</div>
<div class="t cell" style="left:904px;top:360.2px;">Untagged</div>
<div class="t cell" style="left:986px;top:360.2px;">none</div>
<div class="t cell" style="left:1088px;top:360.2px;">none</div>
<div class="red" style="left:8px;top:105px;width:109px;height:29px;border-width:5px"></div>
<div class="red" style="left:645px;top:25px;width:95px;height:36px;border-width:5px"></div>
<div class="red" style="left:212px;top:236px;width:96px;height:31px;border-width:5px"></div>
<div class="a" style="left:525px;top:301px;width:740px;height:483.5px;background:#2f6886"></div>
<div class="a" style="left:531px;top:332px;width:728px;height:402.6px;background:#e6e6e6"></div>
<div class="t n" style="left:534.6px;top:308.7px;font-size:16px;color:#fff"><span class="c" style="transform:scaleX(0.765)">Ethernet Interface</span></div>
<svg class="a" style="left:1239px;top:308px" width="17" height="17" viewBox="0 0 17 17"><defs><radialGradient id="hg" cx=".35" cy=".3" r=".8"><stop offset="0" stop-color="#7db6dc"/><stop offset=".55" stop-color="#1f74ae"/><stop offset="1" stop-color="#0e5f99"/></radialGradient></defs><circle cx="8.5" cy="8.5" r="6.7" fill="url(#hg)" stroke="#e3edf4" stroke-width="1.7"/><text x="8.5" y="12.3" text-anchor="middle" font-family="Liberation Sans,sans-serif" font-weight="bold" font-size="10.5" fill="#fff">?</text></svg>
<div class="t lab" style="right:1153px;top:337.5px;text-align:right;">Interface Name</div>
<div class="inp" style="left:642px;top:338px;width:608px;height:21px;background:#f4f4f4;border-color:#d0d0d0"></div>
<div class="t " style="left:646.5px;top:338.5px;color:#b8b8b8">ethernet1/2</div>
<div class="t lab" style="right:1153px;top:362.5px;text-align:right;">Comment</div>
<div class="inp" style="left:642px;top:363px;width:608px;height:21px;"></div>
<div class="t lab" style="right:1153px;top:387.5px;text-align:right;">Interface Type</div>
<div class="inp" style="left:642px;top:388px;width:588.5px;height:21px;"></div>
<div class="trg" style="left:1229.5px;top:388px;width:20.5px;height:21px;"></div>
<div class="t " style="left:646.5px;top:388.5px;color:#000">Layer3</div>
<div class="t lab" style="right:1153px;top:412.5px;text-align:right;">Netflow Profile</div>
<div class="inp" style="left:642px;top:413px;width:588.5px;height:21px;"></div>
<div class="trg" style="left:1229.5px;top:413px;width:20.5px;height:21px;"></div>
<div class="t " style="left:646.5px;top:413.5px;color:#000">None</div>
<div class="a" style="left:537px;top:467px;width:713px;height:261.6px;background:#fff;border:1px solid #c8c8c8"></div>
<div class="a" style="left:537px;top:438px;width:54.299999999999955px;height:29px;background:#bdbdbd;border-radius:5px 5px 0 0"></div>
<div class="t n" style="left:504.15px;width:120px;top:443px;text-align:center;font-size:14.5px;color:#4f4f4f"><span class="c cc" style="transform:scaleX(0.76)">Config</span></div>
<div class="a" style="left:594px;top:438px;width:44px;height:29px;background:#bdbdbd;border-radius:5px 5px 0 0"></div>
<div class="t n" style="left:556px;width:120px;top:443px;text-align:center;font-size:14.5px;color:#4f4f4f"><span class="c cc" style="transform:scaleX(0.76)">IPv4</span></div>
<div class="a" style="left:640.5px;top:438px;width:43.5px;height:29px;background:#bdbdbd;border-radius:5px 5px 0 0"></div>
<div class="t n" style="left:602.25px;width:120px;top:443px;text-align:center;font-size:14.5px;color:#4f4f4f"><span class="c cc" style="transform:scaleX(0.76)">IPv6</span></div>
<div class="a" style="left:687px;top:438px;width:65px;height:29px;background:#bdbdbd;border-radius:5px 5px 0 0"></div>
<div class="t n" style="left:659.5px;width:120px;top:443px;text-align:center;font-size:14.5px;color:#4f4f4f"><span class="c cc" style="transform:scaleX(0.76)">SD-WAN</span></div>
<div class="a" style="left:754.5px;top:438px;width:72px;height:30px;background:#fff;border:1px solid #c8c8c8;border-bottom:none;border-radius:5px 5px 0 0"></div>
<div class="t n" style="left:730.5px;width:120px;top:443px;text-align:center;font-size:14.5px;color:#3b3b3b"><span class="c cc" style="transform:scaleX(0.76)">Advanced</span></div>
<div class="a" style="left:546px;top:482.7px;width:694.8px;height:46.8px;border:1px solid #d0d0d0"></div>
<div class="a" style="left:552px;top:476px;width:78px;height:14px;background:#fff"></div>
<div class="t " style="left:555px;top:474px;font-weight:bold;color:#41698a;letter-spacing:-0.3px">Link Settings</div>
<div class="t lab" style="right:1157.5px;top:497.5px;text-align:right;">Link Speed</div>
<div class="inp" style="left:638px;top:498px;width:139px;height:20.5px;border-color:#dadada"></div>
<div class="t " style="left:642.5px;top:498.5px;color:#bdbdbd">auto</div>
<div class="t lab" style="right:930px;top:497.5px;text-align:right;">Link Duplex</div>
<div class="inp" style="left:864.5px;top:498px;width:139.5px;height:20.5px;border-color:#dadada"></div>
<div class="t " style="left:869px;top:498.5px;color:#bdbdbd">auto</div>
<div class="t lab" style="right:703.5px;top:497.5px;text-align:right;">Link State</div>
<div class="inp" style="left:1092px;top:498px;width:119px;height:20.5px;"></div>
<div class="trg" style="left:1210px;top:498px;width:21px;height:20.5px;"></div>
<div class="t " style="left:1096.5px;top:498.5px;color:#000">auto</div>
<div class="a" style="left:546px;top:562.5px;width:694.8px;height:151px;background:#fff;border:1px solid #cfcfcf"></div>
<div class="a" style="left:546px;top:534px;width:72px;height:29.5px;background:#fff;border:1px solid #cfcfcf;border-bottom:none;border-radius:5px 5px 0 0"></div>
<div class="t n" style="left:512px;width:140px;top:538.5px;text-align:center;font-size:14.5px;color:#3b3b3b"><span class="c cc" style="transform:scaleX(0.76)">Other Info</span></div>
<div class="a" style="left:621px;top:534px;width:80.5px;height:28.5px;background:#bdbdbd;border-radius:5px 5px 0 0"></div>
<div class="t n" style="left:591.25px;width:140px;top:538.5px;text-align:center;font-size:14.5px;color:#4f4f4f"><span class="c cc" style="transform:scaleX(0.76)">ARP Entries</span></div>
<div class="a" style="left:704.5px;top:534px;width:74.79999999999995px;height:28.5px;background:#bdbdbd;border-radius:5px 5px 0 0"></div>
<div class="t n" style="left:671.9px;width:140px;top:538.5px;text-align:center;font-size:14.5px;color:#4f4f4f"><span class="c cc" style="transform:scaleX(0.76)">ND Entries</span></div>
<div class="a" style="left:782px;top:534px;width:75px;height:28.5px;background:#bdbdbd;border-radius:5px 5px 0 0"></div>
<div class="t n" style="left:749.5px;width:140px;top:538.5px;text-align:center;font-size:14.5px;color:#4f4f4f"><span class="c cc" style="transform:scaleX(0.76)">NDP Proxy</span></div>
<div class="a" style="left:858.8px;top:534px;width:49.200000000000045px;height:28.5px;background:#bdbdbd;border-radius:5px 5px 0 0"></div>
<div class="t n" style="left:813.4px;width:140px;top:538.5px;text-align:center;font-size:14.5px;color:#4f4f4f"><span class="c cc" style="transform:scaleX(0.76)">LLDP</span></div>
<div class="a" style="left:911.3px;top:534px;width:51.700000000000045px;height:28.5px;background:#bdbdbd;border-radius:5px 5px 0 0"></div>
<div class="t n" style="left:867.15px;width:140px;top:538.5px;text-align:center;font-size:14.5px;color:#4f4f4f"><span class="c cc" style="transform:scaleX(0.76)">DDNS</span></div>
<div class="t lab" style="right:1110px;top:572px;text-align:right;">Management Profile</div>
<div class="t lab" style="right:1110px;top:597px;text-align:right;">MTU</div>
<div class="a" style="left:555px;top:628.5px;width:676.5px;height:72px;border:1px solid #d0d0d0"></div>
<div class="a" style="left:561px;top:620px;width:108px;height:16px;background:#fff"></div>
<div class="a" style="left:564px;top:623.5px;width:11px;height:11px;background:#fff;border:1px solid #b9b9b9;border-radius:2.5px"></div>
<div class="t " style="left:580px;top:619.5px;font-weight:bold;color:#41698a;letter-spacing:-0.4px">Adjust TCP MSS</div>
<div class="a" style="left:562px;top:644px;width:663px;height:49px;background:#efefef"></div>
<div class="t " style="right:1103.5px;top:643.7px;text-align:right;color:#777">IPv4 MSS Adjustment</div>
<div class="t " style="right:1103.5px;top:669.3px;text-align:right;color:#777">IPv6 MSS Adjustment</div>
<div class="inp" style="left:692.3px;top:644.5px;width:532.5px;height:20.5px;background:#f3f3f3;border-color:#d6d6d6"></div>
<div class="inp" style="left:692.3px;top:669.5px;width:532.5px;height:20.5px;background:#f3f3f3;border-color:#d6d6d6"></div>
<div class="t " style="left:697px;top:670px;color:#666">60</div>
<div class="inp" style="left:685.2px;top:572.2px;width:527px;height:20.4px;border-color:#a2a2a2;border-bottom-color:#8f8f8f"></div>
<div class="trg" style="left:1211.2px;top:572.2px;width:20.3px;height:20.4px;"></div>
<div class="a" style="left:688.8px;top:574.2px;width:25.8px;height:15px;background:#b5d2f5"></div>
<div class="t " style="left:689.5px;top:573px;color:#000">None</div>
<div class="a" style="left:685.2px;top:592.4px;width:546.5px;height:68px;background:#fff;border:1px solid #98a0a5;border-top-color:#8b9196;border-bottom:none"></div>
<div class="t " style="left:689.5px;top:593.5px;color:#000">None</div>
<div class="a" style="left:686.2px;top:612.7px;width:544.5px;height:19px;background:#d5dfe5;border:1px dotted #8e9aa2"></div>
<div class="t " style="left:689.5px;top:612.5px;color:#000">LAN-ICMP</div>
<div class="a" style="left:685.2px;top:631.7px;width:546.5px;height:29.3px;background:#44535c"></div>
<div class="t " style="left:689.5px;top:638.2px;color:#b7c0c5">New</div>
<svg class="a" style="left:716px;top:640.5px" width="16" height="16" viewBox="0 0 16 16"><rect x=".3" y="4.5" width="8" height="6.5" fill="#6f9fd6"/><rect x="1.3" y="5.5" width="6" height="4.5" fill="#dfeaf6"/><path d="M2 9.5l2-2.5 1.5 1.5 1-1 1 2z" fill="#55729a"/><path d="M10.5 2.8l1.3.2.5 1.5 1.5-.500 1 1-.6 1.4 1.3.8v1.4l-1.3.8.6 1.4-1 1-1.5-.500-.500 1.5h-1.4l-.700-1.4-1.5.500-1-1 .600-1.5-1.3-.700V8.3l1.3-.800-.600-1.4 1-1 1.5.500z" fill="#f0bf5e" stroke="#d9a03c" stroke-width=".6"/><circle cx="10.7" cy="8.6" r="1.5" fill="#fdf3d6"/></svg>
<div class="t " style="left:733.5px;top:638.2px;color:#fff">Management Profile</div>
<div class="red" style="left:679px;top:609.2px;width:88px;height:27.59999999999991px;border-width:5px"></div>
<svg class="a" style="left:806px;top:628px" width="17" height="18" viewBox="0 0 17 18"><path d="M5.1 1.2C4.2 1.2 3.7 2 4 2.9L5.7 8.7 4.7 9.4C3.7 8.2 2.4 7.8 1.6 8.6 1.1 9.2 1.5 9.9 2.2 10.5L6.6 15.4C7.2 16.2 8 16.6 9 16.6L12.4 16.8C13.2 16.8 13.8 16.2 14 15.4L15.3 11C15.6 9.6 15.4 8.4 15 7.4 14.7 6.6 13.9 6.3 13.3 6.6 13 5.9 12.1 5.6 11.4 5.9 11 5.2 10.1 5 9.3 5.4L8.7 5.7 6.7 2.2C6.3 1.5 5.8 1.2 5.1 1.2Z" fill="#fff" stroke="#000" stroke-width="1.1" stroke-linejoin="round"/><path d="M8.2 9.8L8.5 13.7M10 9.8L10.3 13.7M11.7 9.8L12 13.7" stroke="#000" stroke-width=".8"/></svg>
<div class="a" style="left:1098px;top:743px;width:71px;height:27.5px;background:#6d9fb8;border:2px solid #fff;border-radius:5px"></div>
<div class="t " style="left:1103.5px;width:60px;top:747px;text-align:center;color:#000">OK</div>
<div class="a" style="left:1175px;top:743px;width:71px;height:27.5px;background:#b9bcc5;border:2px solid #fff;border-radius:5px"></div>
<div class="t " style="left:1180.5px;width:60px;top:747px;text-align:center;color:#000">Cancel</div>
</div></body></html>
